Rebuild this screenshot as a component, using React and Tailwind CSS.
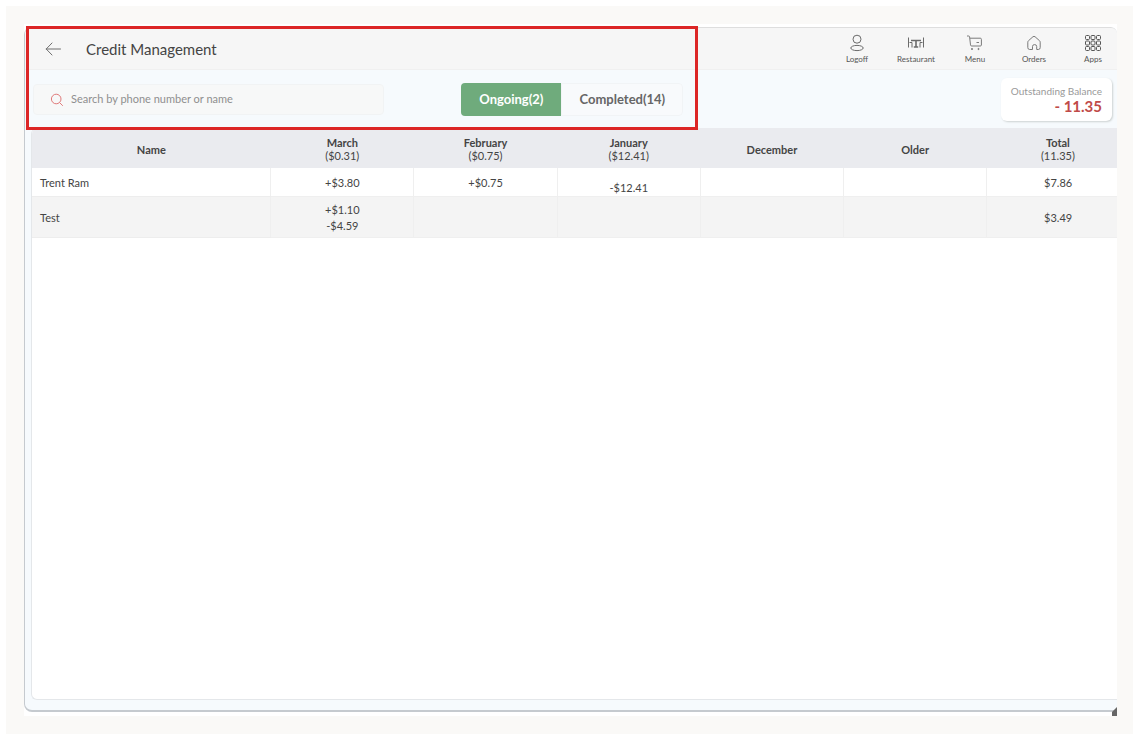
import React, { useState } from "react";

const navItems = [
  { label: "Logoff", icon: <LogoffIcon /> },
  { label: "Restaurant", icon: <RestaurantIcon /> },
  { label: "Menu", icon: <MenuIcon /> },
  { label: "Orders", icon: <OrdersIcon /> },
  { label: "Apps", icon: <AppsIcon /> },
];

const columns = [
  { title: "Name" },
  { title: "March", amount: "($0.31)" },
  { title: "February", amount: "($0.75)" },
  { title: "January", amount: "($12.41)" },
  { title: "December" },
  { title: "Older" },
  { title: "Total", amount: "(11.35)" },
];

const customers = [
  {
    name: "Trent Ram",
    months: [["+$3.80"], ["+$0.75"], ["-$12.41"], [], []],
    total: "$7.86",
  },
  {
    name: "Test",
    months: [["+$1.10", "-$4.59"], [], [], [], []],
    total: "$3.49",
  },
];

function LogoffIcon() {
  return (
    <svg width="18" height="18" viewBox="0 0 18 18" fill="none" stroke="#6b6b6b">
      <circle cx="9" cy="5.2" r="4" />
      <ellipse cx="9" cy="14" rx="6.2" ry="2.6" />
    </svg>
  );
}

function RestaurantIcon() {
  return (
    <svg width="18" height="18" viewBox="0 0 18 18" fill="none" stroke="#6b6b6b">
      <path d="M1.5 3.5v10M2.5 8.5h2.5v5M16.5 3.5v10M15.5 8.5H13v5" />
      <path d="M4 6.5h10" strokeWidth="1.6" />
      <path d="M9 7v6M6.8 13h4.4" strokeWidth="1.6" />
    </svg>
  );
}

function MenuIcon() {
  return (
    <svg width="18" height="18" viewBox="0 0 18 18" fill="none" stroke="#7a7a7a">
      <path d="M1 2h1.6q.9 0 1 .9l.9 8q.1 1.1 1.2 1.1h8.6q1 0 1.1-1V5.4q0-1.2-1.1-1.2H4" />
      <path d="M10.5 8.5h2.5" />
      <circle cx="6" cy="15" r=".6" fill="#7a7a7a" />
      <circle cx="12.5" cy="15" r=".6" fill="#7a7a7a" />
    </svg>
  );
}

function OrdersIcon() {
  return (
    <svg width="18" height="18" viewBox="0 0 18 18" fill="none" stroke="#7a7a7a">
      <path d="M2.8 8.2q0-.9.7-1.5l4.4-3.9q1.1-.9 2.2 0l4.4 3.9q.7.6.7 1.5v5.3q0 2-1.9 2h-1.6v-3q0-1.9-2.1-1.9t-2.1 1.9v3H4.7q-1.9 0-1.9-2z" />
    </svg>
  );
}

function AppsIcon() {
  return (
    <svg width="18" height="18" viewBox="0 0 18 18" fill="none" stroke="#555">
      {[1.5, 7, 12.5].map((y) =>
        [1.5, 7, 12.5].map((x) => (
          <rect key={`${x}-${y}`} x={x} y={y} width="4" height="4" rx="1" />
        ))
      )}
    </svg>
  );
}

const Header = () => {
  return (
    <header className="flex h-[43px] items-center justify-between rounded-tr-md border-t border-b border-t-[#dedede] border-b-[#f0f0f0] bg-[#f6f6f6] pl-5">
      <div className="flex items-center">
        <button type="button" aria-label="Back">
          <svg width="17" height="14" viewBox="0 0 17 14" fill="none" stroke="#6f6f6f">
            <path d="M7 1 1.2 7 7 13M1.2 7h14.3" strokeLinecap="round" />
          </svg>
        </button>
        <h1 className="ml-6 text-[15px] leading-5 text-[#444]">Credit Management</h1>
      </div>
      <nav className="flex gap-[11px] pt-0.5">
        {navItems.map((item) => (
          <button
            key={item.label}
            type="button"
            className="flex w-12 flex-col items-center gap-px text-[8px] leading-3 text-[#555]"
          >
            {item.icon}
            {item.label}
          </button>
        ))}
      </nav>
    </header>
  );
};

const Toolbar = ({ tab, setTab }) => {
  const tabClass = (name) =>
    tab === name ? "bg-[#6fab7c] text-white" : "bg-[#f8fafc] text-[#666]";

  return (
    <div className="flex h-[58px] items-center pt-px pr-[5px] pl-2">
      {/* Search */}
      <label className="flex h-[31px] w-[32.5%] items-center rounded border border-[#f1f3f4] bg-[#f7f8f8] pl-4">
        <svg width="14" height="14" viewBox="0 0 14 14" fill="none" stroke="#e07a7a">
          <circle cx="6.2" cy="6" r="4.8" />
          <path d="m9.6 9.6 3.2 3.2" />
        </svg>
        <input
          type="text"
          aria-label="Search"
          placeholder="Search by phone number or name"
          className="ml-[7px] min-w-0 flex-1 text-[11px] text-[#666] outline-none placeholder:text-[#8f8f8f]"
        />
      </label>

      {/* Tabs */}
      <div className="ml-[7.2%] flex h-[33px] overflow-hidden rounded text-[13px] font-bold">
        <button
          type="button"
          onClick={() => setTab("ongoing")}
          className={`w-[100px] ${tabClass("ongoing")}`}
        >
          Ongoing(2)
        </button>
        <button
          type="button"
          onClick={() => setTab("completed")}
          className={`w-[122px] rounded-r border border-[#f1f4f6] ${tabClass("completed")}`}
        >
          Completed(14)
        </button>
      </div>

      {/* Balance */}
      <div className="ml-auto rounded-md bg-white px-2.5 py-1.5 text-right shadow-[1px_1px_2px_#cdd2d2]">
        <p className="text-[10px] leading-[14px] text-[#999]">Outstanding Balance</p>
        <p className="text-[15px] leading-[17px] font-bold text-[#c04a48]">- 11.35</p>
      </div>
    </div>
  );
};

const CreditTable = () => {
  return (
    <table className="w-full table-fixed border-collapse text-center text-[11px] leading-4 text-[#444]">
      <colgroup>
        <col className="w-[22%]" />
        <col className="w-[13.2%]" />
        <col className="w-[13.2%]" />
        <col className="w-[13.2%]" />
        <col className="w-[13.2%]" />
        <col className="w-[13.2%]" />
        <col />
      </colgroup>
      <thead>
        <tr className="h-10 bg-[#eaebef] leading-[13px]">
          {columns.map((col) => (
            <th key={col.title} className="pt-0.5 font-bold last:pl-3">
              {col.title}
              {col.amount && <span className="block font-normal">{col.amount}</span>}
            </th>
          ))}
        </tr>
      </thead>
      <tbody>
        {customers.map((customer) => (
          <tr key={customer.name} className="h-7 even:h-[41px] even:bg-[#f4f4f4]">
            <td className="border-b border-[#ededed] pt-px pl-2 text-left">{customer.name}</td>
            {customer.months.map((amounts, i) => (
              <td key={i} className="border-b border-l border-[#efefef] pt-px">
                {amounts.map((amount) => (
                  <div key={amount} className={amount === "-$12.41" ? "pt-[11px]" : ""}>
                    {amount}
                  </div>
                ))}
              </td>
            ))}
            <td className="border-b border-l border-[#efefef] pt-px pl-3">{customer.total}</td>
          </tr>
        ))}
      </tbody>
    </table>
  );
};

export default function App() {
  const [tab, setTab] = useState("ongoing");

  return (
    <div className="flex min-h-screen bg-white p-1.5 pr-[7px] pb-[7px] font-['Lato',sans-serif]">
      <div className="flex flex-1 bg-[#faf9f7] pt-[18px] pr-4 pb-[18px] pl-[18px]">
        <main className="relative flex flex-1 flex-col bg-white pt-[3px] pb-1">
          <div className="flex flex-1 flex-col overflow-hidden rounded-tr-md rounded-l-lg border-b-2 border-l border-[#c5cacf] bg-[#f6fafd]">
            <Header />
            <Toolbar tab={tab} setTab={setTab} />
            <section className="mb-2.5 ml-1.5 flex-1 overflow-hidden rounded-l-md border-b border-l border-[#e4e7ea] bg-white">
              <CreditTable />
            </section>
          </div>

          {/* Highlighted area */}
          <div className="pointer-events-none absolute top-0.5 left-0.5 h-[104px] w-[672px] border-3 border-[#dc2626]" />

          {/* Corner grip */}
          <svg className="absolute right-0 bottom-0" width="5" height="9" viewBox="0 0 5 9">
            <path d="M5 0v9H0V5z" fill="#666" />
          </svg>
        </main>
      </div>
    </div>
  );
}
